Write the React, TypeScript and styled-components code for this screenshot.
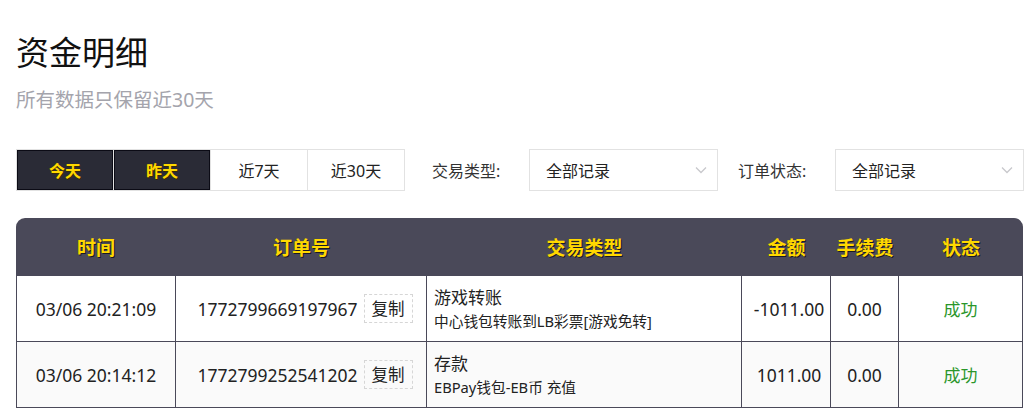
import styled, { createGlobalStyle } from 'styled-components';

const GlobalStyle = createGlobalStyle`
  body {
    margin: 0;
    background: #fff;
    font-family: "Noto Sans", "Noto Sans CJK SC", sans-serif;
    color: #222;
  }
`;

const colors = {
  dark: '#2a2b36',
  header: '#4a4959',
  gold: '#ffd800',
  line: '#4a4959',
  light: '#e2e2e2',
  muted: '#a4a4ac',
  success: '#2a962a',
};

type Record = {
  time: string;
  orderNo: string;
  type: string;
  detail: string;
  amount: string;
  fee: string;
  status: string;
};

const records: Record[] = [
  {
    time: '03/06 20:21:09',
    orderNo: '1772799669197967',
    type: '游戏转账',
    detail: '中心钱包转账到LB彩票[游戏免转]',
    amount: '-1011.00',
    fee: '0.00',
    status: '成功',
  },
  {
    time: '03/06 20:14:12',
    orderNo: '1772799252541202',
    type: '存款',
    detail: 'EBPay钱包-EB币 充值',
    amount: '1011.00',
    fee: '0.00',
    status: '成功',
  },
];

const ranges = ['今天', '昨天', '近7天', '近30天'];

const Page = styled.div`
  width: 1008px;
  padding: 30px 0 0 16px;
`;

const Title = styled.h1`
  margin: 0;
  font-size: 33px;
  font-weight: 400;
  line-height: 46px;
  color: #111;
`;

const Subtitle = styled.p`
  margin: 11px 0 0;
  font-size: 19.5px;
  line-height: 26px;
  color: ${colors.muted};
`;

const Filters = styled.div`
  display: flex;
  align-items: center;
  margin-top: 36px;
  height: 42px;
`;

const RangeGroup = styled.div`
  display: flex;
  height: 42px;
`;

const RangeButton = styled.button<{ active?: boolean }>`
  width: 98px;
  height: 42px;
  margin-left: -1px;
  padding: 0;
  font-family: inherit;
  font-size: 16px;
  font-weight: ${({ active }) => (active ? 700 : 400)};
  color: ${({ active }) => (active ? colors.gold : '#222')};
  background: ${({ active }) => (active ? colors.dark : '#fff')};
  border: 1px solid ${colors.light};
  box-shadow: ${({ active }) => (active ? 'inset 0 0 0 1px #0b0b15' : 'none')};
  text-shadow: ${({ active }) => (active ? '1px 1px 0 #3a2c00' : 'none')};
  cursor: pointer;

  &:first-child {
    margin-left: 0;
  }
`;

const FilterLabel = styled.span<{ gap: number }>`
  margin-left: ${({ gap }) => gap}px;
  width: 97px;
  font-size: 16px;
  color: #333;
`;

const Select = styled.div`
  display: flex;
  align-items: center;
  justify-content: space-between;
  box-sizing: border-box;
  width: 189px;
  height: 42px;
  padding: 0 10px 0 16px;
  border: 1px solid ${colors.light};
  font-size: 16px;
  color: #222;
`;

const Chevron = () => (
  <svg width="12" height="8" viewBox="0 0 12 8" fill="none">
    <path d="M1 1.5l5 5 5-5" stroke="#c8c8cc" strokeWidth="1.3" />
  </svg>
);

const Table = styled.table`
  margin-top: 27px;
  width: 1007px;
  table-layout: fixed;
  border-collapse: separate;
  border-spacing: 0;
  font-size: 17.5px;
`;

const HeadCell = styled.th`
  height: 58px;
  padding: 0;
  background: ${colors.header};
  color: ${colors.gold};
  font-size: 19px;
  font-weight: 700;
  text-shadow: 1px 1px 0 #1a1a22;
  text-align: center;

  &:first-child {
    border-top-left-radius: 9px;
  }
  &:last-child {
    border-top-right-radius: 9px;
  }
`;

const Row = styled.tr<{ striped?: boolean }>`
  background: ${({ striped }) => (striped ? '#fafafa' : '#fff')};
`;

const Cell = styled.td<{ align?: 'left' | 'center' }>`
  height: 65px;
  padding: 0 ${({ align }) => (align === 'left' ? '7px' : '0')};
  text-align: ${({ align }) => align ?? 'center'};
  border-right: 1px solid ${colors.line};
  border-bottom: 1px solid ${colors.line};
  vertical-align: middle;

  &:first-child {
    border-left: 1px solid ${colors.line};
  }
`;

const AmountCell = styled(Cell)`
  padding-left: 6px;
`;

const OrderWrap = styled.div`
  display: flex;
  align-items: center;
  justify-content: center;
  gap: 6px;
  padding-left: 8px;
`;

const CopyButton = styled.span`
  display: inline-block;
  padding: 2px 7px;
  font-size: 16.5px;
  line-height: 23px;
  border: 1px dashed #d6d6d6;
  color: #222;
`;

const TypeName = styled.div`
  font-size: 17px;
  line-height: 25px;
`;

const TypeDetail = styled.div`
  font-size: 14.7px;
  line-height: 22px;
`;

const Status = styled.span`
  color: ${colors.success};
  font-size: 17px;
`;

export default function App() {
  return (
    <>
      <GlobalStyle />
      <Page>
        <Title>资金明细</Title>
        <Subtitle>所有数据只保留近30天</Subtitle>

        <Filters>
          <RangeGroup>
            {ranges.map((r, i) => (
              <RangeButton key={r} active={i < 2}>
                {r}
              </RangeButton>
            ))}
          </RangeGroup>
          <FilterLabel gap={27}>交易类型:</FilterLabel>
          <Select>
            全部记录
            <Chevron />
          </Select>
          <FilterLabel gap={20}>订单状态:</FilterLabel>
          <Select>
            全部记录
            <Chevron />
          </Select>
        </Filters>

        <Table>
          <colgroup>
            <col style={{ width: 160 }} />
            <col style={{ width: 251 }} />
            <col style={{ width: 315 }} />
            <col style={{ width: 89 }} />
            <col style={{ width: 68 }} />
            <col style={{ width: 124 }} />
          </colgroup>
          <thead>
            <tr>
              <HeadCell>时间</HeadCell>
              <HeadCell>订单号</HeadCell>
              <HeadCell>交易类型</HeadCell>
              <HeadCell>金额</HeadCell>
              <HeadCell>手续费</HeadCell>
              <HeadCell>状态</HeadCell>
            </tr>
          </thead>
          <tbody>
            {records.map((rec, i) => (
              <Row key={rec.orderNo} striped={i % 2 === 1}>
                <Cell>{rec.time}</Cell>
                <Cell>
                  <OrderWrap>
                    {rec.orderNo}
                    <CopyButton>复制</CopyButton>
                  </OrderWrap>
                </Cell>
                <Cell align="left">
                  <TypeName>{rec.type}</TypeName>
                  <TypeDetail>{rec.detail}</TypeDetail>
                </Cell>
                <AmountCell>{rec.amount}</AmountCell>
                <Cell>{rec.fee}</Cell>
                <Cell>
                  <Status>{rec.status}</Status>
                </Cell>
              </Row>
            ))}
          </tbody>
        </Table>
      </Page>
    </>
  );
}
